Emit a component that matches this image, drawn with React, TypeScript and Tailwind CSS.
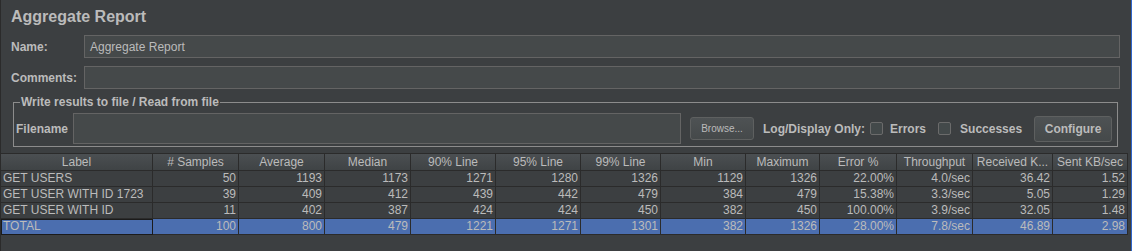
const columns = [
    { name: 'Label', w: 'w-[152px]' },
    { name: '# Samples', w: 'w-[86px]' },
    { name: 'Average', w: 'w-[86px]' },
    { name: 'Median', w: 'w-[86px]' },
    { name: '90% Line', w: 'w-[85px]' },
    { name: '95% Line', w: 'w-[85px]' },
    { name: '99% Line', w: 'w-[80px]' },
    { name: 'Min', w: 'w-[85px]' },
    { name: 'Maximum', w: 'w-[74px]' },
    { name: 'Error %', w: 'w-[77px]' },
    { name: 'Throughput', w: 'w-[76px]' },
    { name: 'Received K...', w: 'w-[80px]' },
    { name: 'Sent KB/sec', w: 'w-[75px]' },
];

const rows = [
    ['GET USERS', '50', '1193', '1173', '1271', '1280', '1326', '1129', '1326', '22.00%', '4.0/sec', '36.42', '1.52'],
    ['GET USER WITH ID 1723', '39', '409', '412', '439', '442', '479', '384', '479', '15.38%', '3.3/sec', '5.05', '1.29'],
    ['GET USER WITH ID', '11', '402', '387', '424', '424', '450', '382', '450', '100.00%', '3.9/sec', '32.05', '1.48'],
    ['TOTAL', '100', '800', '479', '1221', '1271', '1301', '382', '1326', '28.00%', '7.8/sec', '46.89', '2.98'],
];

function Checkbox() {
    return <span className="h-[13px] w-[13px] shrink-0 rounded-[2px] border border-[#6b6b6b] bg-[#43494a]" />;
}

export default function App() {
    return (
        <div
            className="h-[251px] w-[1132px] overflow-hidden border-l border-r border-l-[#2b2b2b] border-r-[#2f65ca] bg-[#3c3f41] text-[12px] text-[#bbbbbb]"
            style={{ fontFamily: '"Liberation Sans", Arial, sans-serif' }}
        >
            <div className="mb-[8px] pl-[10px] pt-[7px] text-[16px] font-bold leading-[20px]">Aggregate Report</div>

            <div className="flex h-[23px] items-center">
                <span className="w-[83px] pl-[10px] font-bold">Name:</span>
                <div className="flex h-[23px] w-[1036px] items-center border border-[#646464] bg-[#45494a] pl-[5px]">
                    Aggregate Report
                </div>
            </div>

            <div className="mt-[8px] flex h-[23px] items-center">
                <span className="w-[83px] pl-[10px] font-bold">Comments:</span>
                <div className="h-[23px] w-[1036px] border border-[#646464] bg-[#45494a]" />
            </div>

            <fieldset className="ml-[12px] mt-[6px] w-[1105px] border border-[#8c8c8c] px-[2px] pb-[2px] pt-[4px]">
                <legend className="ml-[4px] px-[1px] font-bold leading-[14px]">Write results to file / Read from file</legend>
                <div className="flex h-[31px] items-center whitespace-nowrap">
                    <span className="w-[57px] shrink-0 font-bold">Filename</span>
                    <div className="h-[31px] w-[608px] shrink-0 border border-[#646464] bg-[#45494a]" />
                    <button className="ml-[9px] h-[23px] w-[64px] shrink-0 rounded-[3px] border border-[#5e6060] bg-gradient-to-b from-[#4e5254] to-[#45494a] text-[10px] text-[#bbbbbb]">
                        Browse...
                    </button>
                    <span className="ml-[9px] shrink-0 font-bold">Log/Display Only:</span>
                    <span className="ml-[5px] flex shrink-0 items-center">
                        <Checkbox />
                    </span>
                    <span className="ml-[7px] shrink-0 font-bold">Errors</span>
                    <span className="ml-[12px] flex shrink-0 items-center">
                        <Checkbox />
                    </span>
                    <span className="ml-[9px] shrink-0 font-bold">Successes</span>
                    <button className="ml-[12px] h-[26px] w-[78px] shrink-0 rounded-[3px] border border-[#5e6060] bg-gradient-to-b from-[#4e5254] to-[#45494a] text-[12px] font-bold text-[#bbbbbb]">
                        Configure
                    </button>
                </div>
            </fieldset>

            <div className="mt-[6px] w-[1127px] border-t border-[#2b2b2b]">
                <div className="flex">
                    {columns.map((c) => (
                        <div
                            key={c.name}
                            className={`${c.w} flex h-[17px] shrink-0 items-center justify-center overflow-hidden whitespace-nowrap border-b border-r border-[#2b2b2b] bg-gradient-to-b from-[#4b4f52] to-[#3f4345] leading-[16px]`}
                        >
                            {c.name}
                        </div>
                    ))}
                </div>
                {rows.map((r, ri) => {
                    const selected = ri === rows.length - 1;
                    return (
                        <div key={r[0]} className="flex">
                            {r.map((v, ci) => (
                                <div
                                    key={ci}
                                    className={`${columns[ci].w} flex h-[16px] shrink-0 items-center overflow-hidden whitespace-nowrap border-b border-r border-[#2b2b2b] px-[2px] leading-[15px] ${
                                        ci === 0 ? 'justify-start' : 'justify-end'
                                    } ${selected ? 'bg-[#4b6eaf]' : 'bg-[#3c3f41]'} ${
                                        selected && ci === 0 ? 'outline outline-1 -outline-offset-1 outline-[#1b1b1b]' : ''
                                    }`}
                                >
                                    {v}
                                </div>
                            ))}
                        </div>
                    );
                })}
            </div>
        </div>
    );
}
